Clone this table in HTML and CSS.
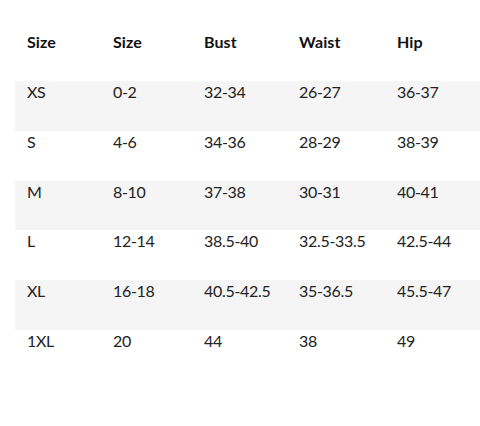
FILE: index.html
```html
<!DOCTYPE html>
<html>
<head>
<meta charset="utf-8">
<link rel="stylesheet" href="styles.css">
</head>
<body>
<table class="size-table">
  <colgroup>
    <col class="c1"><col class="c2"><col class="c3"><col class="c4"><col class="c5">
  </colgroup>
  <thead>
    <tr><th>Size</th><th>Size</th><th>Bust</th><th>Waist</th><th>Hip</th></tr>
  </thead>
  <tbody>
    <tr><td>XS</td><td>0-2</td><td>32-34</td><td>26-27</td><td>36-37</td></tr>
    <tr><td>S</td><td>4-6</td><td>34-36</td><td>28-29</td><td>38-39</td></tr>
    <tr><td>M</td><td>8-10</td><td>37-38</td><td>30-31</td><td>40-41</td></tr>
    <tr><td>L</td><td>12-14</td><td>38.5-40</td><td>32.5-33.5</td><td>42.5-44</td></tr>
    <tr><td>XL</td><td>16-18</td><td>40.5-42.5</td><td>35-36.5</td><td>45.5-47</td></tr>
    <tr><td>1XL</td><td>20</td><td>44</td><td>38</td><td>49</td></tr>
  </tbody>
</table>
</body>
</html>
```
FILE: styles.css
```css
html, body {
  margin: 0;
  padding: 0;
  background: #ffffff;
}
body {
  padding-top: 31px;
  padding-left: 15px;
  font-family: Lato, "Open Sans", sans-serif;
  color: #222222;
}
.size-table {
  border-collapse: collapse;
  table-layout: fixed;
  width: 465px;
  font-size: 16px;
  line-height: 21px;
}
.c1 { width: 86px; }
.c2 { width: 91px; }
.c3 { width: 95px; }
.c4 { width: 98px; }
.c5 { width: 95px; }
.size-table th,
.size-table td {
  height: 49.8px;
  box-sizing: border-box;
  padding: 0 0 0 12px;
  text-align: left;
  vertical-align: top;
  white-space: nowrap;
}
.size-table th {
  font-weight: 700;
  color: #111111;
  height: 50px;
  letter-spacing: 0.1px;
}
.size-table td {
  font-weight: 400;
  letter-spacing: -0.3px;
}
.size-table tbody tr:nth-child(odd) {
  background: #f5f5f5;
}
```
